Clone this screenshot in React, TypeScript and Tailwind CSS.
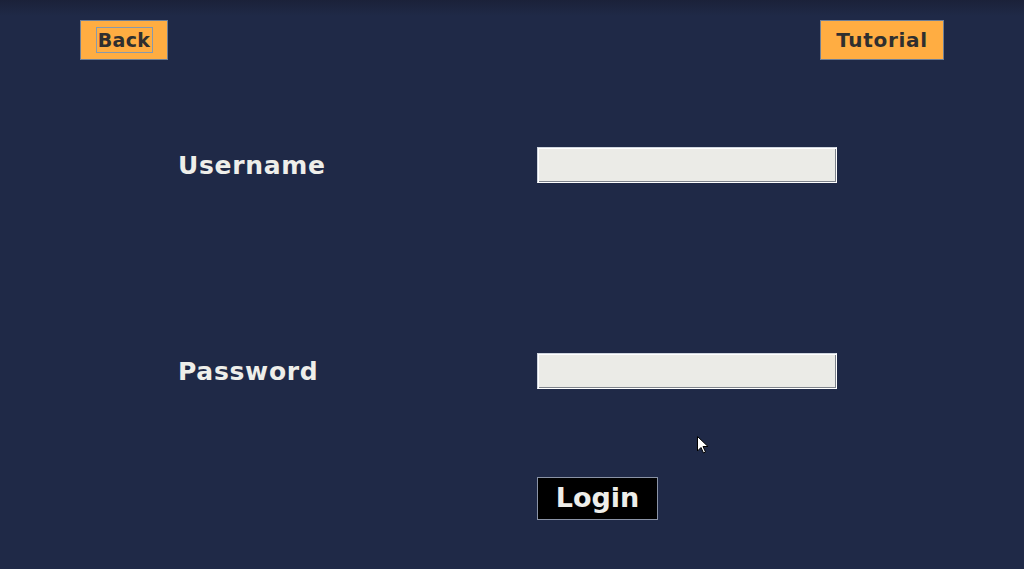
import React from "react";

const font = { fontFamily: '"DejaVu Sans", "Liberation Sans", sans-serif' };

function Entry() {
  return (
    <input
      type="text"
      className="w-[300px] h-[36px] bg-[#ebebe7] border border-t-[#cfd5de] border-l-[#cfd5de] border-b-white border-r-white shadow-[inset_1px_1px_0_#ffffff,inset_-1px_-1px_0_#7d828b] outline-none px-1 text-[#222]"
    />
  );
}

function Label({ text }: { text: string }) {
  return (
    <div className="h-[36px] pt-[2px] flex items-center text-[25px] font-bold text-[#eeeeea] tracking-[0.7px]">
      {text}
    </div>
  );
}

export default function App() {
  return (
    <div
      style={font}
      className="relative w-full h-[569px] overflow-hidden bg-[#1f2947] bg-[linear-gradient(to_bottom,#1b2139_0px,#1f2947_16px)]"
    >
      <div className="flex justify-between px-[80px] pt-[20px]">
        <button className="w-[88px] h-[40px] bg-[#ffad42] border border-[#6f7f96] flex items-center justify-center">
          <span className="border border-[#8799ad] w-[57px] h-[26px] flex items-center justify-center text-[19px] font-bold text-[#2f2f2f] tracking-[0.3px]">
            Back
          </span>
        </button>
        <button className="w-[124px] h-[40px] bg-[#ffad42] border border-[#6f7f96] flex items-center justify-center text-[20px] font-bold text-[#2f2f2f] tracking-[0.7px]">
          Tutorial
        </button>
      </div>

      <div className="ml-[178px] mt-[87px] grid grid-cols-[359px_300px] items-center">
        <Label text="Username" />
        <Entry />
        <div className="h-[170px]" />
        <div className="h-[170px]" />
        <Label text="Password" />
        <Entry />
        <div className="h-[88px]" />
        <div className="h-[88px]" />
        <div />
        <div>
          <button className="w-[121px] h-[43px] bg-black border border-[#8a93a6] text-[27px] font-bold text-[#eeeeea] flex items-center justify-center">
            Login
          </button>
        </div>
      </div>

      <svg
        className="absolute left-[697px] top-[436px]"
        width="12"
        height="20"
        viewBox="0 0 12 20"
      >
        <path
          d="M0.5 0.5 L0.5 15 L4 11.5 L6.5 17 L8.5 16 L6 10.5 L11 10.5 Z"
          fill="#ffffff"
          stroke="#000000"
          strokeWidth="1"
        />
      </svg>
    </div>
  );
}
